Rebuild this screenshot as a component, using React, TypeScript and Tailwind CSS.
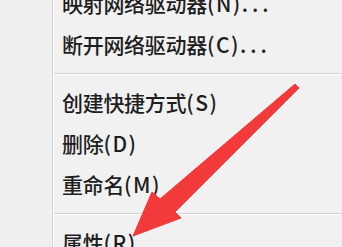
type Item = { cjk: string; key: string; dots?: boolean } | null;

const items: Item[] = [
  { cjk: "映射网络驱动器", key: "(N)", dots: true },
  { cjk: "断开网络驱动器", key: "(C)", dots: true },
  null,
  { cjk: "创建快捷方式", key: "(S)" },
  { cjk: "删除", key: "(D)" },
  { cjk: "重命名", key: "(M)" },
  null,
  { cjk: "属性", key: "(R)" },
];

function Arrow() {
  return (
    <svg className="pointer-events-none absolute left-0 top-0" width="342" height="247" viewBox="0 0 342 247">
      <polygon
        points="295,84 299,88 175,212 181,218 133,236 152,192 160,199"
        fill="#f23a3a"
        stroke="#f23a3a"
        strokeWidth="1"
        strokeLinejoin="round"
      />
    </svg>
  );
}

export default function App() {
  return (
    <div className="relative h-[247px] w-[342px] overflow-hidden bg-[#f1f1f1] font-['Noto_Sans_CJK_SC','Noto_Sans',sans-serif] text-[#1e1e1e]">
      <div className="flex h-full">
        {/* icon gutter */}
        <div className="w-[52px] shrink-0 bg-[#efefef]" />
        <div className="w-px shrink-0 bg-[#d6d6d6]" />
        <div className="w-px shrink-0 bg-white" />
        <div className="-mt-[17px] flex flex-1 flex-col">
          {items.map((item, i) =>
            item === null ? (
              <div key={i} className="flex h-[17px] shrink-0 flex-col justify-center">
                <div className="h-px bg-[#d2d2d2]" />
                <div className="h-px bg-white" />
              </div>
            ) : (
              <div key={i} className="flex h-[41px] shrink-0 items-center pl-[8px] text-[21px] font-medium leading-none whitespace-nowrap">
                <span className="tracking-[-0.3px]">{item.cjk}</span>
                <span className="tracking-[1.5px]">{item.key}</span>
                {item.dots && <span className="tracking-[4px]">...</span>}
              </div>
            )
          )}
        </div>
      </div>
      <Arrow />
    </div>
  );
}
